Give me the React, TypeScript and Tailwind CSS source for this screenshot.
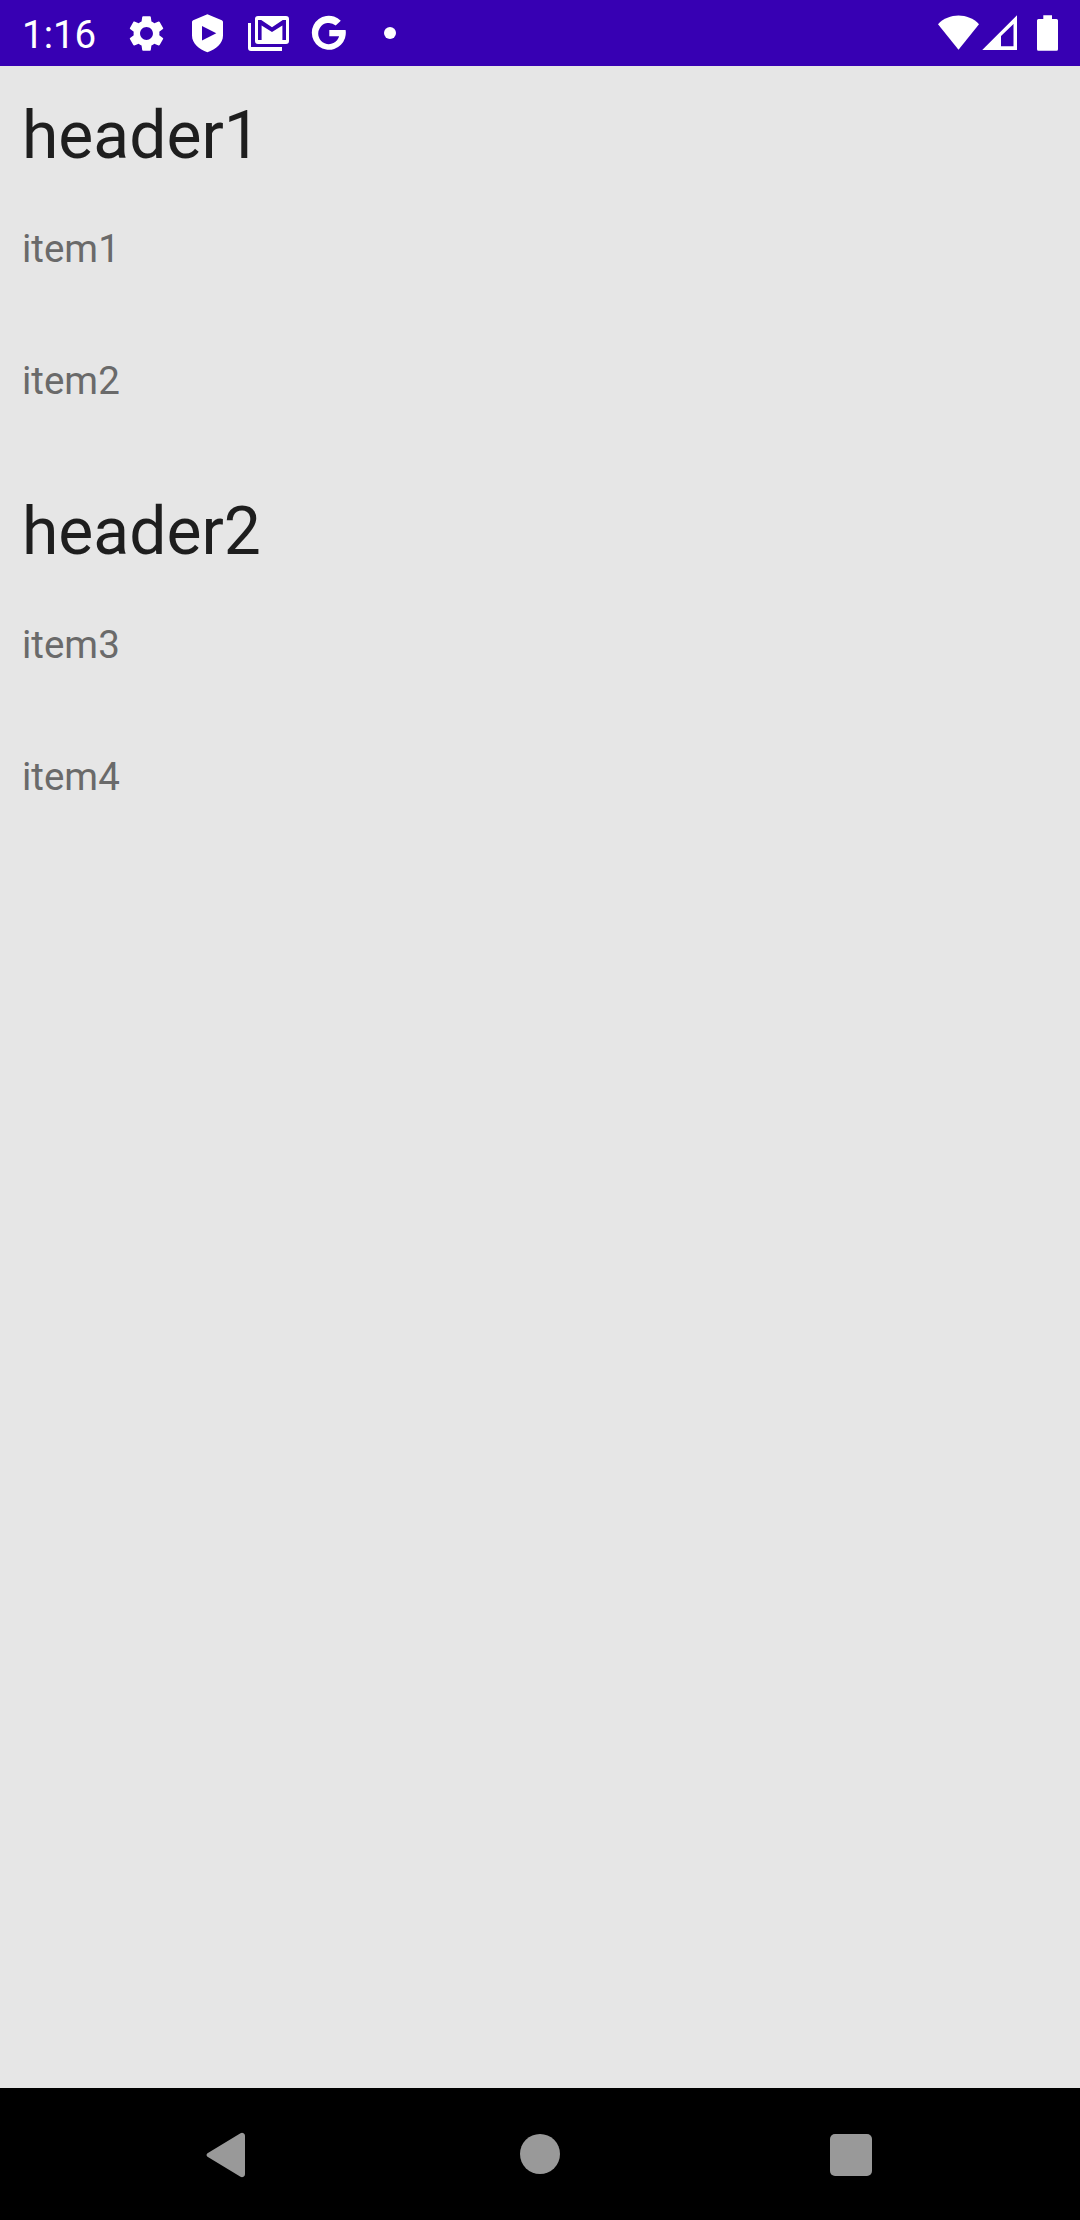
import { MdSettings } from "react-icons/md";

const sections = [
  { title: "header1", items: ["item1", "item2"] },
  { title: "header2", items: ["item3", "item4"] },
];

function StatusBar() {
  return (
    <header className="flex h-[66px] shrink-0 items-center justify-between bg-[#3700b3] pl-[22px] pr-[22px] text-white">
      <div className="flex items-center">
        <span className="w-[104px] whitespace-nowrap pt-[3px] text-[38.5px] leading-[45px]">1:16</span>
        <MdSettings className="-ml-px size-[43px]" />
        <svg className="ml-[18px] h-[66px] w-[43px]" viewBox="186 0 43 66" fill="currentColor">
          <path
            fillRule="evenodd"
            d="M207.4 14.2L221.800 20.300Q223 20.800 223 22v13.500c0 8-7 14-15.600 16.800C199 49.500 192 43.500 192 35.500V22Q192 20.800 193.200 20.300zM202 26v14.500l14.300-7.200z"
          />
        </svg>
        <svg className="ml-[18px] h-[66px] w-[43px]" viewBox="247 0 43 66" fill="currentColor">
          <path
            fillRule="evenodd"
            d="M258 16h28a3 3 0 0 1 3 3v22a3 3 0 0 1-3 3h-28a3 3 0 0 1-3-3V19a3 3 0 0 1 3-3zM258 20v20h3.600V25.500l10.400 6.500 10.400-6.500V40h3.600V20h-3.200L272 27.200 261.200 20z"
          />
          <path d="M248 23h3v24h31v4h-31a3 3 0 0 1-3-3z" />
        </svg>
        <svg className="ml-[18px] h-[66px] w-[43px]" viewBox="308 0 43 66" fill="currentColor">
          <path d="M340.800 20.700L335.700 25.500A10.600 10.600 0 1 0 339.100 36.300H329.300V30H345.600A17 17 0 1 1 340.800 20.700Z" />
        </svg>
        <span className="ml-[33px] size-3 rounded-full bg-white" />
      </div>
      <svg className="h-[66px] w-[122px]" viewBox="936 0 122 66" fill="currentColor">
        <path d="M938 24.200C949 12.700 968 12.700 979 24.200L958.500 49.700z" />
        <path fillRule="evenodd" d="M1017 15.200V50H982.200zM1013.500 24L1001 36v10.300h12.500z" />
        <path d="M1043.300 15.200h8.700V19h4.500a1.500 1.500 0 0 1 1.500 1.500v28.700a1.500 1.500 0 0 1-1.500 1.500h-18a1.500 1.500 0 0 1-1.500-1.500V20.500a1.500 1.500 0 0 1 1.500-1.500h4.800z" />
      </svg>
    </header>
  );
}

function NavigationBar() {
  return (
    <nav className="flex h-[132px] shrink-0 items-center justify-between bg-black pl-[206px] pr-[208px] text-[#999999]">
      <svg className="mt-px h-[46px] w-[40px]" viewBox="0 0 40 46" fill="currentColor">
        <path d="M1.500 21.300L34.500 1.300a3 3 0 0 1 4.500 2.700v38a3 3 0 0 1-4.500 2.700L1.500 24.700a2 2 0 0 1 0-3.400z" />
      </svg>
      <span className="ml-[4px] size-10 rounded-full bg-current" />
      <span className="mt-[2px] size-[42px] rounded-[5px] bg-current" />
    </nav>
  );
}

export default function App() {
  return (
    <div className="flex h-[2220px] w-[1080px] flex-col bg-[#e6e6e6] font-['Roboto',sans-serif]">
      <StatusBar />
      <main className="flex-1">
        {sections.map((section) => (
          <section key={section.title}>
            <h2 className="h-[132px] pl-[22px] pt-[31px] text-[66px] leading-[77px] text-[#1e1e1e]">{section.title}</h2>
            <ul>
              {section.items.map((item) => (
                <li key={item} className="h-[132px] pl-[22px] pt-[28px] text-[38.5px] leading-[45px] text-[#6a6a6a]">
                  {item}
                </li>
              ))}
            </ul>
          </section>
        ))}
      </main>
      <NavigationBar />
    </div>
  );
}
